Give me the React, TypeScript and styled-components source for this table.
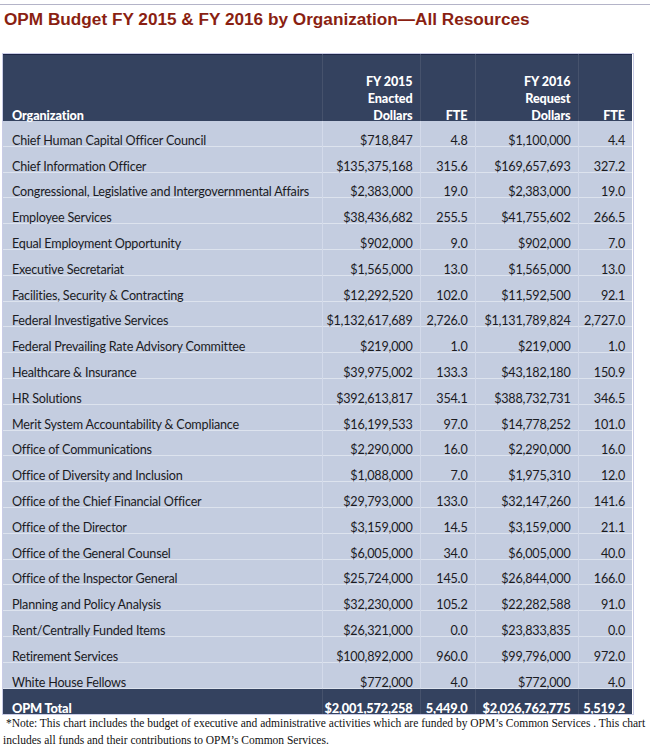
import React from "react";
import styled, { createGlobalStyle } from "styled-components";

const GlobalStyle = createGlobalStyle`
  html, body { margin: 0; padding: 0; background: #ffffff; }
  body { width: 650px; overflow: hidden; }
`;

const Page = styled.div`
  width: 650px;
  padding-top: 4px;
`;

const TopRule = styled.div`
  height: 1px;
  background: #b4b4c8;
`;

const Title = styled.h1`
  margin: 3px 0 0 4px;
  font-family: "Liberation Sans", Arial, sans-serif;
  font-weight: 700;
  font-size: 17.2px;
  line-height: 22px;
  color: #8a1f12;
`;

const TableFrame = styled.div`
  margin: 24px 0 0 3px;
  width: 630px;
  outline: 1px solid #c9cce6;
`;

const Table = styled.table`
  width: 629px;
  border-collapse: collapse;
  table-layout: fixed;
  font-family: Lato, "Open Sans", sans-serif;
`;

const HeadRow = styled.tr`
  background: #34425f;
  border-top: 1px solid #1d2547;
`;

const HeadCell = styled.th<{ $align?: "left" | "right" }>`
  height: 66px;
  padding: 0 7px 0 ${(p) => (p.$align === "left" ? "9px" : "4px")};
  vertical-align: bottom;
  text-align: ${(p) => p.$align ?? "right"};
  color: #ffffff;
  font-weight: 900;
  font-size: 12.6px;
  line-height: 17px;
  letter-spacing: -0.1px;
  border-right: 1px solid #46526c;
  &:last-child { border-right: none; }
`;

const HeadText = styled.span`
  display: block;
  margin-bottom: -3px;
`;

const BodyRow = styled.tr`
  background: #c4cde0;
  border-bottom: 1px solid #dde3ee;
`;

const Cell = styled.td<{ $align?: "left" | "right" }>`
  height: 24.8px;
  padding: 0 7px 0 ${(p) => (p.$align === "left" ? "9px" : "2px")};
  vertical-align: bottom;
  text-align: ${(p) => p.$align ?? "right"};
  color: #1b1b1f;
  font-size: 12.6px;
  line-height: 14px;
  letter-spacing: -0.2px;
  white-space: nowrap;
  border-right: 1px solid #d3daea;
  &:last-child { border-right: none; }
`;

const CellText = styled.span`
  display: block;
  margin-bottom: -2px;
`;

const TotalRow = styled.tr`
  background: #34425f;
`;

const TotalCell = styled.td<{ $align?: "left" | "right" }>`
  height: 25px;
  padding: 0 7px 0 ${(p) => (p.$align === "left" ? "9px" : "2px")};
  vertical-align: bottom;
  text-align: ${(p) => p.$align ?? "right"};
  color: #ffffff;
  font-weight: 900;
  font-size: 12.8px;
  line-height: 12px;
  letter-spacing: -0.2px;
  white-space: nowrap;
  border-right: 1px solid #46526c;
  &:last-child { border-right: none; }
`;

const Note = styled.p`
  margin: 1px 0 0 3px;
  font-family: "Liberation Serif", "Times New Roman", serif;
  font-size: 11.5px;
  line-height: 17px;
  color: #111;
  white-space: nowrap;
`;

type Row = [string, string, string, string, string];

const rows: Row[] = [
  ["Chief Human Capital Officer Council", "$718,847", "4.8", "$1,100,000", "4.4"],
  ["Chief Information Officer", "$135,375,168", "315.6", "$169,657,693", "327.2"],
  ["Congressional, Legislative and Intergovernmental Affairs", "$2,383,000", "19.0", "$2,383,000", "19.0"],
  ["Employee Services", "$38,436,682", "255.5", "$41,755,602", "266.5"],
  ["Equal Employment Opportunity", "$902,000", "9.0", "$902,000", "7.0"],
  ["Executive Secretariat", "$1,565,000", "13.0", "$1,565,000", "13.0"],
  ["Facilities, Security & Contracting", "$12,292,520", "102.0", "$11,592,500", "92.1"],
  ["Federal Investigative Services", "$1,132,617,689", "2,726.0", "$1,131,789,824", "2,727.0"],
  ["Federal Prevailing Rate Advisory Committee", "$219,000", "1.0", "$219,000", "1.0"],
  ["Healthcare & Insurance", "$39,975,002", "133.3", "$43,182,180", "150.9"],
  ["HR Solutions", "$392,613,817", "354.1", "$388,732,731", "346.5"],
  ["Merit System Accountability & Compliance", "$16,199,533", "97.0", "$14,778,252", "101.0"],
  ["Office of Communications", "$2,290,000", "16.0", "$2,290,000", "16.0"],
  ["Office of Diversity and Inclusion", "$1,088,000", "7.0", "$1,975,310", "12.0"],
  ["Office of the Chief Financial Officer", "$29,793,000", "133.0", "$32,147,260", "141.6"],
  ["Office of the Director", "$3,159,000", "14.5", "$3,159,000", "21.1"],
  ["Office of the General Counsel", "$6,005,000", "34.0", "$6,005,000", "40.0"],
  ["Office of the Inspector General", "$25,724,000", "145.0", "$26,844,000", "166.0"],
  ["Planning and Policy Analysis", "$32,230,000", "105.2", "$22,282,588", "91.0"],
  ["Rent/Centrally Funded Items", "$26,321,000", "0.0", "$23,833,835", "0.0"],
  ["Retirement Services", "$100,892,000", "960.0", "$99,796,000", "972.0"],
  ["White House Fellows", "$772,000", "4.0", "$772,000", "4.0"],
];

export default function App() {
  return (
    <Page>
      <GlobalStyle />
      <TopRule />
      <Title>OPM Budget FY 2015 &amp; FY 2016 by Organization—All Resources</Title>
      <TableFrame>
        <Table>
          <colgroup>
            <col style={{ width: 319 }} />
            <col style={{ width: 98 }} />
            <col style={{ width: 55 }} />
            <col style={{ width: 103 }} />
            <col style={{ width: 54 }} />
          </colgroup>
          <thead>
            <HeadRow>
              <HeadCell $align="left">
                <HeadText>Organization</HeadText>
              </HeadCell>
              <HeadCell>
                <HeadText>
                  FY 2015
                  <br />
                  Enacted
                  <br />
                  Dollars
                </HeadText>
              </HeadCell>
              <HeadCell>
                <HeadText>FTE</HeadText>
              </HeadCell>
              <HeadCell>
                <HeadText>
                  FY 2016
                  <br />
                  Request
                  <br />
                  Dollars
                </HeadText>
              </HeadCell>
              <HeadCell>
                <HeadText>FTE</HeadText>
              </HeadCell>
            </HeadRow>
          </thead>
          <tbody>
            {rows.map((r) => (
              <BodyRow key={r[0]}>
                {r.map((v, i) => (
                  <Cell key={i} $align={i === 0 ? "left" : "right"}>
                    <CellText>{v}</CellText>
                  </Cell>
                ))}
              </BodyRow>
            ))}
            <TotalRow>
              <TotalCell $align="left">OPM Total</TotalCell>
              <TotalCell>$2,001,572,258</TotalCell>
              <TotalCell>5,449.0</TotalCell>
              <TotalCell>$2,026,762,775</TotalCell>
              <TotalCell>5,519.2</TotalCell>
            </TotalRow>
          </tbody>
        </Table>
      </TableFrame>
      <Note>
        &nbsp;*Note: This chart includes the budget of executive and administrative activities which are funded by OPM’s Common Services . This chart
        <br />
        includes all funds and their contributions to OPM’s Common Services.
      </Note>
    </Page>
  );
}
